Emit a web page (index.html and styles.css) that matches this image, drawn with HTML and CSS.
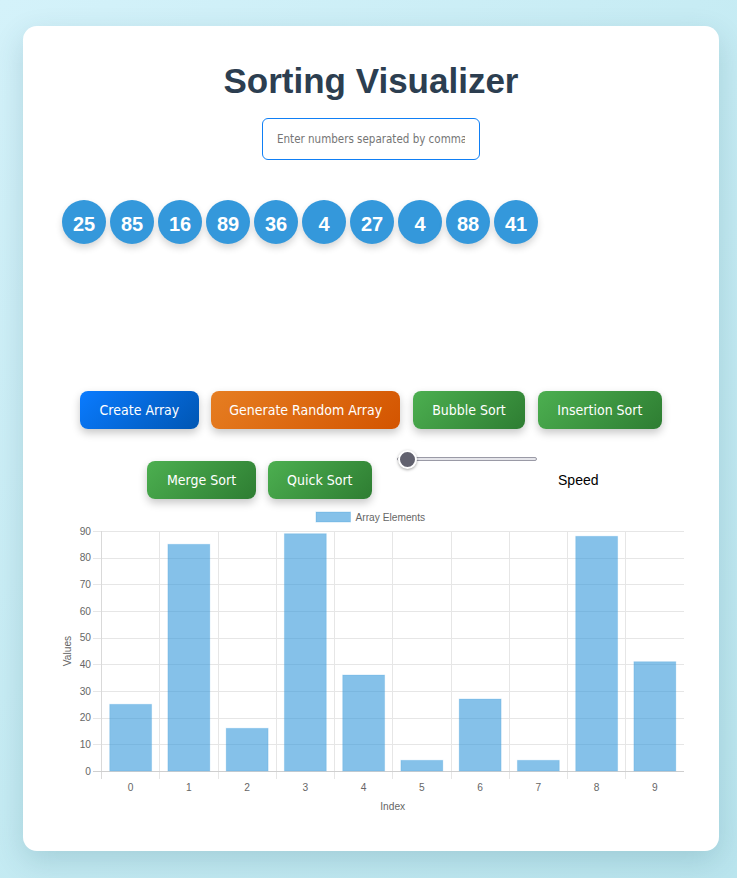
FILE: index.html
```html
<!DOCTYPE html>
<html lang="en">
<head>
<meta charset="utf-8">
<title>Sorting Visualizer</title>
<link rel="stylesheet" href="styles.css">
</head>
<body>
<main class="card">
  <h1 class="title">Sorting Visualizer</h1>
  <div class="input-wrap">
    <input class="num-input" type="text" placeholder="Enter numbers separated by commas">
  </div>
  <div class="array">
    <div class="circle">25</div>
    <div class="circle">85</div>
    <div class="circle">16</div>
    <div class="circle">89</div>
    <div class="circle">36</div>
    <div class="circle">4</div>
    <div class="circle">27</div>
    <div class="circle">4</div>
    <div class="circle">88</div>
    <div class="circle">41</div>
  </div>
  <div class="controls">
    <div class="row row-one">
      <button class="btn btn-blue">Create Array</button>
      <button class="btn btn-orange">Generate Random Array</button>
      <button class="btn btn-green">Bubble Sort</button>
      <button class="btn btn-green">Insertion Sort</button>
    </div>
    <div class="row row-two">
      <button class="btn btn-green btn-low">Merge Sort</button>
      <button class="btn btn-green btn-low">Quick Sort</button>
      <input class="speed" type="range" min="1" max="100" value="1">
      <label class="speed-label">Speed</label>
    </div>
  </div>
  <div class="chart">
    <svg class="chart-svg" width="636" height="316" viewBox="0 0 636 316" xmlns="http://www.w3.org/2000/svg">
      <g class="legend">
        <rect x="263" y="7" width="34.5" height="10" fill="#3498db" fill-opacity="0.6" stroke="#3498db" stroke-opacity="0.25"/>
        <text x="302.5" y="15.6" class="lbl">Array Elements</text>
      </g>
      <g stroke="#e6e6e6" stroke-width="1">
        <line x1="40" y1="26.5" x2="631" y2="26.5"/>
        <line x1="40" y1="53.5" x2="631" y2="53.5"/>
        <line x1="40" y1="79.5" x2="631" y2="79.5"/>
        <line x1="40" y1="106.5" x2="631" y2="106.5"/>
        <line x1="40" y1="133.5" x2="631" y2="133.5"/>
        <line x1="40" y1="159.5" x2="631" y2="159.5"/>
        <line x1="40" y1="186.5" x2="631" y2="186.5"/>
        <line x1="40" y1="213.5" x2="631" y2="213.5"/>
        <line x1="40" y1="239.5" x2="631" y2="239.5"/>
        <line x1="106.5" y1="26" x2="106.5" y2="274"/>
        <line x1="165.5" y1="26" x2="165.5" y2="274"/>
        <line x1="223.5" y1="26" x2="223.5" y2="274"/>
        <line x1="281.5" y1="26" x2="281.5" y2="274"/>
        <line x1="339.5" y1="26" x2="339.5" y2="274"/>
        <line x1="398.5" y1="26" x2="398.5" y2="274"/>
        <line x1="456.5" y1="26" x2="456.5" y2="274"/>
        <line x1="514.5" y1="26" x2="514.5" y2="274"/>
        <line x1="572.5" y1="26" x2="572.5" y2="274"/>
      </g>
      <line x1="48.5" y1="26" x2="48.5" y2="274" stroke="#d9d9d9"/>
      <line x1="40" y1="266.5" x2="631" y2="266.5" stroke="#cfcfcf"/>
      <g fill="#3498db" fill-opacity="0.6" stroke="#3498db" stroke-opacity="0.2" stroke-width="1">
        <rect x="56.7" y="199.3" width="41.9" height="66.7"/>
        <rect x="114.9" y="39.3" width="41.9" height="226.7"/>
        <rect x="173.2" y="223.3" width="41.9" height="42.7"/>
        <rect x="231.4" y="28.7" width="41.9" height="237.3"/>
        <rect x="289.7" y="170" width="41.9" height="96"/>
        <rect x="347.9" y="255.3" width="41.9" height="10.7"/>
        <rect x="406.2" y="194" width="41.9" height="72"/>
        <rect x="464.4" y="255.3" width="41.9" height="10.7"/>
        <rect x="522.7" y="31.3" width="41.9" height="234.7"/>
        <rect x="580.9" y="156.7" width="41.9" height="109.3"/>
      </g>
      <g class="ytick" text-anchor="end">
        <text x="38" y="269.6">0</text>
        <text x="38" y="242.9">10</text>
        <text x="38" y="216.3">20</text>
        <text x="38" y="189.6">30</text>
        <text x="38" y="162.9">40</text>
        <text x="38" y="136.3">50</text>
        <text x="38" y="109.6">60</text>
        <text x="38" y="82.9">70</text>
        <text x="38" y="56.3">80</text>
        <text x="38" y="29.6">90</text>
      </g>
      <g class="xtick" text-anchor="middle">
        <text x="77.6" y="285.6">0</text>
        <text x="135.9" y="285.6">1</text>
        <text x="194.1" y="285.6">2</text>
        <text x="252.4" y="285.6">3</text>
        <text x="310.6" y="285.6">4</text>
        <text x="368.9" y="285.6">5</text>
        <text x="427.1" y="285.6">6</text>
        <text x="485.4" y="285.6">7</text>
        <text x="543.6" y="285.6">8</text>
        <text x="601.9" y="285.6">9</text>
      </g>
      <text class="lbl" x="339.75" y="304.6" text-anchor="middle">Index</text>
      <text class="lbl" x="0" y="0" text-anchor="middle" transform="translate(17.6 146) rotate(-90)">Values</text>
    </svg>
  </div>
</main>
</body>
</html>
```
FILE: styles.css
```css
* { box-sizing: border-box; }

html, body {
  margin: 0;
  padding: 0;
}

body {
  min-height: 878px;
  background: linear-gradient(135deg, #d4f2fa 0%, #c5ebf3 50%, #bae5ee 100%);
  font-family: "Liberation Sans", Arial, sans-serif;
  padding: 26px 18px 27px 23px;
}

.card {
  width: 696px;
  background: #ffffff;
  border-radius: 14px;
  box-shadow: 0 10px 30px rgba(0, 70, 90, 0.16);
  padding: 30px 30px 30px 30px;
}

.title {
  margin: 5px 0 0;
  font-size: 35px;
  line-height: 40px;
  font-weight: bold;
  text-align: center;
  color: #2c3e50;
}

.input-wrap {
  display: flex;
  justify-content: center;
  margin-top: 17px;
}

.num-input {
  width: 218px;
  height: 42px;
  border: 1.5px solid #0f7ff5;
  border-radius: 6px;
  padding: 0 14px;
  font-family: "DejaVu Sans Condensed", "DejaVu Sans", sans-serif;
  font-size: 11.5px;
  color: #333;
  outline: none;
}

.num-input::placeholder {
  color: #757575;
}

.array {
  display: flex;
  gap: 4px;
  margin-top: 40px;
  padding-left: 9px;
  height: 191px;
  align-items: flex-start;
}

.circle {
  width: 44px;
  height: 44px;
  border-radius: 50%;
  background: #3498db;
  color: #ffffff;
  font-weight: bold;
  font-size: 20px;
  display: flex;
  align-items: center;
  justify-content: center;
  padding-top: 4px;
  box-shadow: 0 4px 7px rgba(0, 0, 0, 0.16);
}

.controls {
  display: flex;
  flex-direction: column;
}

.row {
  display: flex;
  justify-content: center;
}

.row-one {
  gap: 12.5px;
  height: 38px;
}

.row-two {
  margin-top: 21px;
  height: 49px;
  align-items: flex-start;
  padding-left: 4px;
}

.btn {
  height: 38px;
  border: none;
  border-radius: 8px;
  padding: 0 19.5px;
  color: #ffffff;
  font-family: "DejaVu Sans Condensed", "DejaVu Sans", sans-serif;
  font-size: 14px;
  white-space: nowrap;
  box-shadow: 0 4px 8px rgba(0, 0, 0, 0.22);
  cursor: pointer;
}

.btn-blue { background: linear-gradient(135deg, #0a7bff, #0056b3); }
.btn-orange {
  background: linear-gradient(135deg, #e67e22, #d35400);
  padding: 0 18px;
}
.btn-green { background: linear-gradient(135deg, #4caf50, #2e7d32); }

.btn-low {
  margin-top: 11px;
}

.btn-low + .btn-low {
  margin-left: 12px;
}

.speed {
  -webkit-appearance: none;
  appearance: none;
  width: 140px;
  height: 18px;
  margin: 0 0 0 25px;
  background: transparent;
}

.speed::-webkit-slider-runnable-track {
  height: 4px;
  background: #e5e5ea;
  border: 1px solid #9a9aa6;
  border-radius: 3px;
}

.speed::-webkit-slider-thumb {
  -webkit-appearance: none;
  appearance: none;
  width: 19px;
  height: 19px;
  margin-top: -8.5px;
  border-radius: 50%;
  background: #62626f;
  border: 2px solid #ffffff;
  box-shadow: 0 1px 3px rgba(0, 0, 0, 0.35);
}

.speed-label {
  margin-top: 11px;
  margin-left: 21px;
  line-height: 38px;
  font-size: 14px;
  color: #000;
}

.chart {
  margin-top: 6px;
  height: 316px;
}

.chart-svg {
  display: block;
  font-family: "Liberation Sans", Arial, sans-serif;
}

.chart-svg text {
  font-size: 10.2px;
  fill: #666666;
}
```
